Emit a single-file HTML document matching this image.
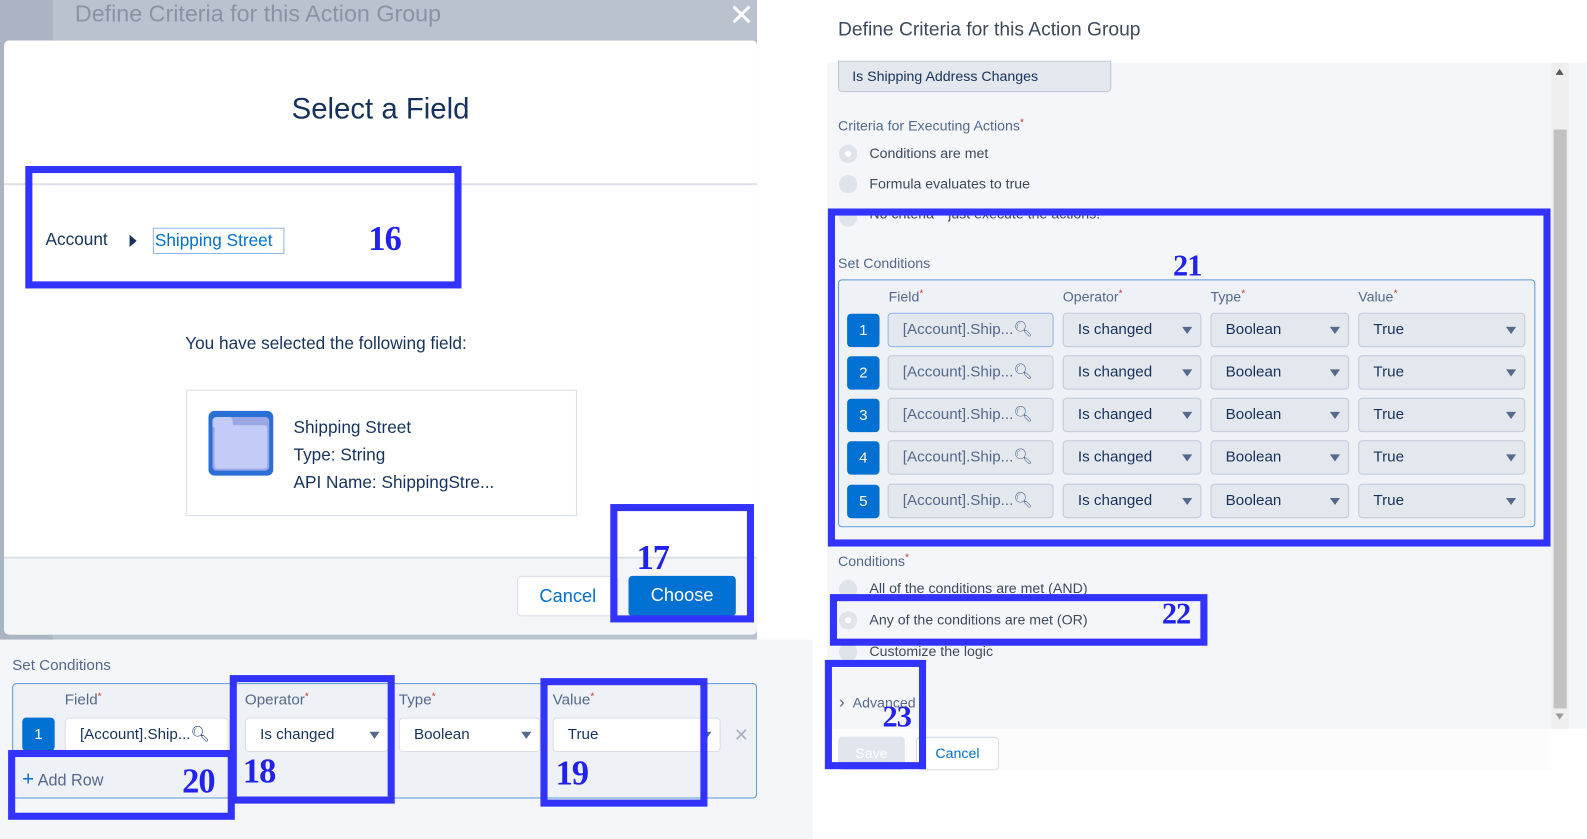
<!DOCTYPE html>
<html><head><meta charset="utf-8"><style>
*{box-sizing:border-box;margin:0;padding:0}
body{width:1587px;height:829px;position:relative;overflow:hidden;background:#fff;font-family:"Liberation Sans",sans-serif;color:#16325c}
#w{position:absolute;left:0;top:0;width:1568px;height:819px;transform:scale(1.0121);transform-origin:0 0}
.a{position:absolute}
.ann{position:absolute;border:7px solid #3333ff}
.num{position:absolute;font-family:"Liberation Serif",serif;font-weight:bold;color:#2222ee;font-size:34px;line-height:1;letter-spacing:-1px}
.box{position:absolute;height:34px;border:1px solid #c2c9d6;border-radius:4px;background:#e3e7ee;font-size:15px;line-height:32px;padding-left:14px;color:#16325c}
.w{background:#fff;border-color:#d8dde6}
.car:after{content:"";position:absolute;right:8px;top:13px;border-left:5px solid transparent;border-right:5px solid transparent;border-top:7px solid #54698d}
.n{position:absolute;width:32px;height:33px;background:#0070d2;color:#fff;border-radius:4px;text-align:center;line-height:33px;font-size:15px}
.lbl{position:absolute;font-size:14px;color:#54698d}
.lbl i{color:#c23934;font-style:normal;font-size:10px;vertical-align:top}
.rad{position:absolute;width:18px;height:18px;border-radius:50%;background:#dfe3ea}
.rt{position:absolute;font-size:14px;color:#3e4a5c}
</style></head><body><div id="w">

<!-- LEFT -->
<div class="a" style="left:0;top:0;width:748px;height:632px;background:#b9c2ce"></div>
<div class="a" style="left:0;top:0;width:52px;height:632px;background:#aab4c2"></div>
<div class="a" style="left:74px;top:0;font-size:23px;color:#8894a6">Define Criteria for this Action Group</div>
<div class="a" style="left:720px;top:-2px;font-size:30px;color:#fff">✕</div>
<div class="a" style="left:4px;top:40px;width:744px;height:587px;background:#fff;border-radius:5px"></div>
<div class="a" style="left:4px;top:550px;width:744px;height:77px;background:#f4f5f9;border-top:2px solid #d8dde6;border-radius:0 0 5px 5px"></div>
<div class="a" style="left:4px;top:181px;width:744px;height:2px;background:#dde1e8"></div>
<div class="a" style="left:0;top:92px;width:752px;text-align:center;font-size:29px;color:#16325c">Select a Field</div>
<div class="a" style="left:45px;top:227px;font-size:17px;color:#16325c">Account</div>
<div class="a" style="left:128px;top:232px;border-top:6px solid transparent;border-bottom:6px solid transparent;border-left:7px solid #16325c"></div>
<div class="a" style="left:151px;top:225px;width:130px;height:26px;border:1px solid #8fb4ee;font-size:17px;color:#0070d2;padding-left:1px;line-height:24px">Shipping Street</div>
<div class="ann" style="left:25px;top:164px;width:431px;height:121px"></div>
<div class="num" style="left:364px;top:220px">16</div>
<div class="a" style="left:183px;top:330px;font-size:17px;color:#16325c">You have selected the following field:</div>
<div class="a" style="left:184px;top:385px;width:386px;height:125px;border:1px solid #d8dde6;background:#fff"></div>
<div class="a" style="left:206px;top:406px;width:64px;height:64px;border-radius:6px;background:#2a6fd6"></div>
<div class="a" style="left:210px;top:412px;width:56px;height:53px;border-radius:4px;background:#9aa6e6"></div>
<div class="a" style="left:210px;top:412px;width:20px;height:10px;border-radius:4px 4px 0 0;background:#c3cbf8"></div>
<div class="a" style="left:212px;top:420px;width:52px;height:43px;border-radius:3px;background:#c3cbf8"></div>
<div class="a" style="left:290px;top:409px;font-size:17px;line-height:27px;color:#16325c">Shipping Street<br>Type: String<br>API Name: ShippingStre...</div>
<div class="a" style="left:511px;top:569px;width:100px;height:40px;border:1px solid #d8dde6;border-radius:4px;background:#fff;font-size:18px;color:#0070d2;text-align:center;line-height:38px">Cancel</div>
<div class="a" style="left:621px;top:569px;width:106px;height:40px;border-radius:4px;background:#0070d2;font-size:18px;color:#fff;text-align:center;line-height:38px">Choose</div>
<div class="ann" style="left:603px;top:498px;width:142px;height:117px"></div>
<div class="num" style="left:629px;top:535px">17</div>

<div class="a" style="left:0;top:632px;width:803px;height:197px;background:#f4f6fa"></div>
<div class="a" style="left:12px;top:649px;font-size:15px;color:#54698d">Set Conditions</div>
<div class="a" style="left:12px;top:675px;width:736px;height:114px;border:1px solid #5b9ad6;border-radius:4px;background:#eef1f6"></div>
<div class="lbl" style="left:64px;top:683px;font-size:15px">Field<i>*</i></div>
<div class="lbl" style="left:242px;top:683px;font-size:15px">Operator<i>*</i></div>
<div class="lbl" style="left:394px;top:683px;font-size:15px">Type<i>*</i></div>
<div class="lbl" style="left:546px;top:683px;font-size:15px">Value<i>*</i></div>
<div class="n" style="left:22px;top:709px">1</div>
<div class="box w" style="left:64px;top:709px;width:162px">[Account].Ship...🔍︎</div>
<div class="box w car" style="left:242px;top:709px;width:142px">Is changed</div>
<div class="box w car" style="left:394px;top:709px;width:140px">Boolean</div>
<div class="box w car" style="left:546px;top:709px;width:166px">True</div>
<div class="a" style="left:725px;top:716px;font-size:18px;color:#a8b1bf">✕</div>
<div class="a" style="left:22px;top:759px;font-size:16px;color:#54698d"><span style="color:#0070d2;font-size:20px">+</span> Add Row</div>
<div class="ann" style="left:8px;top:741px;width:224px;height:69px"></div>
<div class="num" style="left:180px;top:756px">20</div>
<div class="ann" style="left:227px;top:667px;width:163px;height:127px"></div>
<div class="num" style="left:240px;top:746px">18</div>
<div class="ann" style="left:534px;top:670px;width:165px;height:127px"></div>
<div class="num" style="left:549px;top:748px">19</div>

<!-- RIGHT -->
<div class="a" style="left:828px;top:19px;font-size:19px;color:#3e4a5c">Define Criteria for this Action Group</div>
<div class="a" style="left:817px;top:62px;width:770px;height:658px;background:#f4f6fa"></div>
<div class="a" style="left:1533px;top:62px;width:17px;height:658px;background:#efefef"></div>
<div class="a" style="left:1535px;top:128px;width:13px;height:572px;background:#c1c1c1"></div>
<div class="a" style="left:1537px;top:68px;border-left:4px solid transparent;border-right:4px solid transparent;border-bottom:6px solid #555"></div>
<div class="a" style="left:1537px;top:705px;border-left:4px solid transparent;border-right:4px solid transparent;border-top:6px solid #999"></div>
<div class="a" style="left:817px;top:720px;width:716px;height:40px;background:#fcfcfd"></div>
<div class="a" style="left:828px;top:60px;width:270px;height:31px;border:1px solid #c2c9d6;border-radius:0 0 4px 4px;background:#e3e7ee;font-size:14px;line-height:29px;padding-left:13px;color:#16325c">Is Shipping Address Changes</div>
<div class="rt" style="left:828px;top:116px;color:#54698d">Criteria for Executing Actions<span style="color:#c23934;font-size:10px;vertical-align:top">*</span></div>
<div class="rad" style="left:829px;top:143px"></div><div class="a" style="left:835px;top:149px;width:6px;height:6px;border-radius:50%;background:#fff"></div>
<div class="rt" style="left:859px;top:143px">Conditions are met</div>
<div class="rad" style="left:829px;top:173px"></div>
<div class="rt" style="left:859px;top:173px">Formula evaluates to true</div>
<div class="rad" style="left:829px;top:206px"></div>
<div class="rt" style="left:859px;top:203px">No criteria—just execute the actions!</div>
<div class="rt" style="left:828px;top:252px;color:#54698d">Set Conditions</div>
<div class="a" style="left:828px;top:276px;width:689px;height:245px;border:1px solid #5b9ad6;border-radius:4px;background:#eef1f6"></div>
<div class="lbl" style="left:878px;top:285px">Field<i>*</i></div>
<div class="lbl" style="left:1050px;top:285px">Operator<i>*</i></div>
<div class="lbl" style="left:1196px;top:285px">Type<i>*</i></div>
<div class="lbl" style="left:1342px;top:285px">Value<i>*</i></div>

<div class="n" style="left:837px;top:310px">1</div>
<div class="box" style="left:877px;top:309px;width:164px;border-color:#8fb4ee;color:#54698d">[Account].Ship...🔍︎</div>
<div class="box car" style="left:1050px;top:309px;width:137px">Is changed</div>
<div class="box car" style="left:1196px;top:309px;width:137px">Boolean</div>
<div class="box car" style="left:1342px;top:309px;width:165px">True</div>

<div class="n" style="left:837px;top:352px">2</div>
<div class="box" style="left:877px;top:351px;width:164px;color:#54698d">[Account].Ship...🔍︎</div>
<div class="box car" style="left:1050px;top:351px;width:137px">Is changed</div>
<div class="box car" style="left:1196px;top:351px;width:137px">Boolean</div>
<div class="box car" style="left:1342px;top:351px;width:165px">True</div>

<div class="n" style="left:837px;top:394px">3</div>
<div class="box" style="left:877px;top:393px;width:164px;color:#54698d">[Account].Ship...🔍︎</div>
<div class="box car" style="left:1050px;top:393px;width:137px">Is changed</div>
<div class="box car" style="left:1196px;top:393px;width:137px">Boolean</div>
<div class="box car" style="left:1342px;top:393px;width:165px">True</div>

<div class="n" style="left:837px;top:436px">4</div>
<div class="box" style="left:877px;top:435px;width:164px;color:#54698d">[Account].Ship...🔍︎</div>
<div class="box car" style="left:1050px;top:435px;width:137px">Is changed</div>
<div class="box car" style="left:1196px;top:435px;width:137px">Boolean</div>
<div class="box car" style="left:1342px;top:435px;width:165px">True</div>

<div class="n" style="left:837px;top:479px">5</div>
<div class="box" style="left:877px;top:478px;width:164px;color:#54698d">[Account].Ship...🔍︎</div>
<div class="box car" style="left:1050px;top:478px;width:137px">Is changed</div>
<div class="box car" style="left:1196px;top:478px;width:137px">Boolean</div>
<div class="box car" style="left:1342px;top:478px;width:165px">True</div>

<div class="ann" style="left:818px;top:206px;width:714px;height:334px"></div>
<div class="num" style="left:1159px;top:248px;font-size:30px">21</div>

<div class="rt" style="left:828px;top:546px;color:#54698d">Conditions<span style="color:#c23934;font-size:10px;vertical-align:top">*</span></div>
<div class="rad" style="left:829px;top:573px"></div>
<div class="rt" style="left:859px;top:573px">All of the conditions are met (AND)</div>
<div class="rad" style="left:829px;top:604px"></div><div class="a" style="left:835px;top:610px;width:6px;height:6px;border-radius:50%;background:#fff"></div>
<div class="rt" style="left:859px;top:604px">Any of the conditions are met (OR)</div>
<div class="rad" style="left:829px;top:635px"></div>
<div class="rt" style="left:859px;top:635px">Customize the logic</div>
<div class="ann" style="left:820px;top:587px;width:373px;height:51px"></div>
<div class="num" style="left:1148px;top:592px;font-size:30px">22</div>
<div class="rt" style="left:829px;top:684px;color:#54698d"><span style="font-size:17px">›</span>&nbsp;&nbsp;Advanced</div>
<div class="a" style="left:828px;top:728px;width:66px;height:33px;background:#e0e5ee;border-radius:4px;color:#fff;font-size:14px;text-align:center;line-height:33px">Save</div>
<div class="a" style="left:905px;top:728px;width:82px;height:33px;background:#fff;border:1px solid #d8dde6;border-radius:4px;color:#0070d2;font-size:14px;text-align:center;line-height:31px">Cancel</div>
<div class="ann" style="left:815px;top:652px;width:100px;height:108px"></div>
<div class="num" style="left:872px;top:694px;font-size:30px">23</div>
</div></body></html>
